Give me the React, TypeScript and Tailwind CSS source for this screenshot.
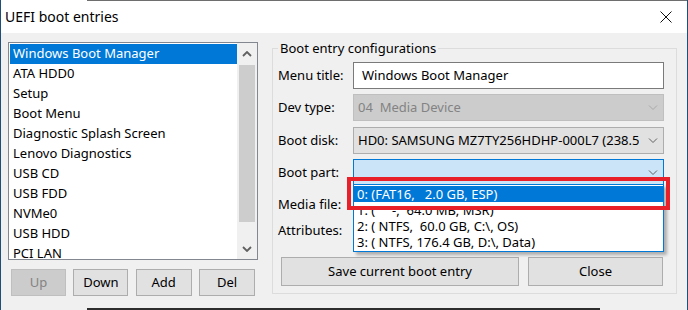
import React from 'react';

const FONT = { fontFamily: '"Noto Sans", "Liberation Sans", sans-serif' };

const entries = [
  'Windows Boot Manager',
  'ATA HDD0',
  'Setup',
  'Boot Menu',
  'Diagnostic Splash Screen',
  'Lenovo Diagnostics',
  'USB CD',
  'USB FDD',
  'NVMe0',
  'USB HDD',
  'PCI LAN',
];

const partitions = [
  '0: (FAT16,   2.0 GB, ESP)',
  '1: (     -,  64.0 MB, MSR)',
  '2: ( NTFS,  60.0 GB, C:\\, OS)',
  '3: ( NTFS, 176.4 GB, D:\\, Data)',
];

function Chevron({ color = '#606060' }: { color?: string }) {
  return (
    <svg width="10" height="6" viewBox="0 0 10 6" className="shrink-0">
      <polyline points="1,0.5 5,4.5 9,0.5" fill="none" stroke={color} strokeWidth="1" />
    </svg>
  );
}

function ScrollArrow({ up }: { up?: boolean }) {
  return (
    <svg width="10" height="6" viewBox="0 0 10 6">
      <polyline
        points={up ? '1,5 5,1 9,5' : '1,1 5,5 9,1'}
        fill="none"
        stroke="#606060"
        strokeWidth="1.8"
      />
    </svg>
  );
}

function Button({ label, disabled, className = '' }: { label: string; disabled?: boolean; className?: string }) {
  return (
    <div
      className={
        'flex items-center justify-center border text-[13px] leading-none ' +
        (disabled
          ? 'bg-[#cccccc] border-[#bfbfbf] text-[#838383] '
          : 'bg-[#e1e1e1] border-[#adadad] text-black ') +
        className
      }
    >
      {label}
    </div>
  );
}

function Label({ children }: { children: React.ReactNode }) {
  return <div className="w-[75px] shrink-0 text-[13px] leading-none text-black">{children}</div>;
}

export default function App() {
  return (
    <div
      className="w-[688px] h-[310px] flex flex-col bg-[#f0f0f0] border-l border-r border-[#1f4e79] overflow-hidden"
      style={FONT}
    >
      {/* top edge */}
      <div className="h-[1px] flex shrink-0">
        <div className="w-[86px] bg-white" />
        <div className="flex-1 bg-[#6e6e6e]" />
      </div>

      {/* title bar */}
      <div className="h-[32px] shrink-0 bg-white flex items-center justify-between pl-[4px] pr-[15px]">
        <span className="text-[14px] text-black leading-none">UEFI boot entries</span>
        <svg width="12" height="12" viewBox="0 0 12 12">
          <line x1="0.5" y1="0.5" x2="11.5" y2="11.5" stroke="#111" strokeWidth="1" />
          <line x1="11.5" y1="0.5" x2="0.5" y2="11.5" stroke="#111" strokeWidth="1" />
        </svg>
      </div>

      {/* client area */}
      <div className="flex-1 flex items-start pl-[7px] pt-[8px]">
        {/* left column */}
        <div className="w-[250px] mt-[1px] flex flex-col">
          <div className="h-[218px] border border-[#828790] bg-white flex overflow-hidden">
            <div className="flex-1 pt-[1px] pl-[1px] flex flex-col">
              {entries.map((e, i) => (
                <div
                  key={e}
                  className={
                    'h-[20px] shrink-0 flex items-center pl-[3px] pb-[1px] text-[13px] leading-none ' +
                    (i === 0 ? 'bg-[#0078d7] text-white' : 'text-black')
                  }
                >
                  {e}
                </div>
              ))}
            </div>
            <div className="w-[20px] bg-[#f0f0f0] flex flex-col">
              <div className="h-[22px] flex items-center justify-center">
                <ScrollArrow up />
              </div>
              <div className="mx-[2px] h-[157px] bg-[#cdcdcd]" />
              <div className="flex-1 flex items-end justify-center pb-[7px]">
                <ScrollArrow />
              </div>
            </div>
          </div>
          <div className="flex justify-between px-[3px] mt-[9px]">
            <Button label="Up" disabled className="w-[55px] h-[27px]" />
            <Button label="Down" className="w-[55px] h-[27px]" />
            <Button label="Add" className="w-[56px] h-[27px]" />
            <Button label="Del" className="w-[56px] h-[27px]" />
          </div>
        </div>

        {/* right group */}
        <fieldset className="ml-[14px] w-[405px] h-[253px] border border-[#dcdcdc] pl-[5px] pr-[12px]">
          <legend className="px-[2px] text-[13px] leading-[14px] text-black">
            Boot entry configurations
          </legend>

          <div className="flex flex-col pt-[7px]">
            <div className="h-[27px] flex items-center">
              <Label>Menu title:</Label>
              <div className="w-[311px] h-[27px] border border-[#7a7a7a] bg-white flex items-center pl-[8px] text-[13px] leading-none text-black">
                Windows Boot Manager
              </div>
            </div>

            <div className="h-[27px] mt-[5px] flex items-center">
              <Label>Dev type:</Label>
              <div className="w-[311px] h-[27px] border border-[#bfbfbf] bg-[#cccccc] flex items-center justify-between pl-[4px] pr-[5px] text-[13px] leading-none text-[#838383]">
                <span className="whitespace-pre">04  Media Device</span>
                <Chevron color="#a8a8a8" />
              </div>
            </div>

            <div className="h-[27px] mt-[6px] flex items-center">
              <Label>Boot disk:</Label>
              <div className="w-[311px] h-[27px] border border-[#adadad] bg-[#e1e1e1] flex items-center justify-between pl-[4px] pr-[5px] text-[13px] leading-none text-black">
                <span className="whitespace-nowrap overflow-hidden">HD0: SAMSUNG MZ7TY256HDHP-000L7 (238.5</span>
                <span className="pl-[8px]">
                  <Chevron />
                </span>
              </div>
            </div>

            <div className="h-[27px] mt-[5px] flex items-center">
              <Label>Boot part:</Label>
              <div className="relative w-[311px] h-[27px] border border-[#0078d7] bg-[#cce4f7] flex items-center justify-end pr-[5px]">
                <Chevron />
                {/* open drop-down list */}
                <div className="absolute left-[-1px] top-[24px] w-[311px] z-10 border border-[#0078d7] bg-white pt-[1px] pb-[1px] shadow-[3px_3px_3px_rgba(0,0,0,0.28)]">
                  {partitions.map((p, i) => (
                    <div
                      key={p}
                      className={
                        'h-[16px] flex items-center pl-[3px] text-[13px] leading-[16px] whitespace-pre ' +
                        (i === 0 ? 'bg-[#0078d7] text-white' : 'text-black')
                      }
                    >
                      {p}
                    </div>
                  ))}
                  {/* red highlight */}
                  <div className="absolute left-[-7px] top-[-8px] w-[323px] h-[33px] border-[4px] border-[#e8202a]" />
                </div>
              </div>
            </div>

            <div className="h-[26px] mt-[5px] flex items-center">
              <Label>Media file:</Label>
              <div className="w-[311px] h-[26px] border border-[#7a7a7a] bg-white" />
            </div>

            <div className="h-[26px] flex items-center">
              <Label>Attributes:</Label>
            </div>

            <div className="flex mt-[14px] pl-[3px] gap-[9px]">
              <Button label="Save current boot entry" className="w-[238px] h-[29px]" />
              <Button label="Close" className="w-[135px] h-[29px]" />
            </div>
          </div>
        </fieldset>
      </div>

      {/* bottom edge */}
      <div className="h-[2px] flex shrink-0">
        <div className="w-[86px]" />
        <div className="w-[513px] bg-[#2d2d2d]" />
        <div className="flex-1" />
      </div>
    </div>
  );
}
